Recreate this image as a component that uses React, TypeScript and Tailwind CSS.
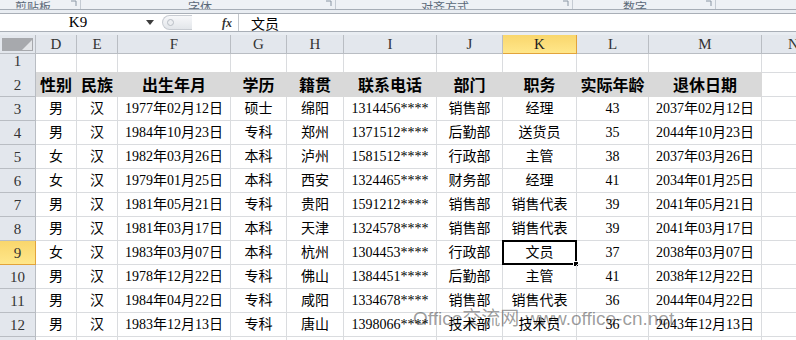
import React from 'react'

const letters = ['D', 'E', 'F', 'G', 'H', 'I', 'J', 'K', 'L', 'M', 'N']
const gridCols =
  'grid grid-cols-[36px_41px_41px_113px_56px_57px_93px_66px_74px_72px_113px_64px]'

const headers = ['性别', '民族', '出生年月', '学历', '籍贯', '联系电话', '部门', '职务', '实际年龄', '退休日期']

const rows: string[][] = [
  ['男', '汉', '1977年02月12日', '硕士', '绵阳', '1314456****', '销售部', '经理', '43', '2037年02月12日'],
  ['男', '汉', '1984年10月23日', '专科', '郑州', '1371512****', '后勤部', '送货员', '35', '2044年10月23日'],
  ['女', '汉', '1982年03月26日', '本科', '泸州', '1581512****', '行政部', '主管', '38', '2037年03月26日'],
  ['女', '汉', '1979年01月25日', '本科', '西安', '1324465****', '财务部', '经理', '41', '2034年01月25日'],
  ['男', '汉', '1981年05月21日', '专科', '贵阳', '1591212****', '销售部', '销售代表', '39', '2041年05月21日'],
  ['男', '汉', '1981年03月17日', '本科', '天津', '1324578****', '销售部', '销售代表', '39', '2041年03月17日'],
  ['女', '汉', '1983年03月07日', '本科', '杭州', '1304453****', '行政部', '文员', '37', '2038年03月07日'],
  ['男', '汉', '1978年12月22日', '专科', '佛山', '1384451****', '后勤部', '主管', '41', '2038年12月22日'],
  ['男', '汉', '1984年04月22日', '专科', '咸阳', '1334678****', '销售部', '销售代表', '36', '2044年04月22日'],
  ['男', '汉', '1983年12月13日', '专科', '唐山', '1398066****', '技术部', '技术员', '36', '2043年12月13日'],
]

function RowHeader({ n, active }: { n: number | string; active?: boolean }) {
  return (
    <div
      className={`flex items-end justify-center pb-[3px] border-r border-b font-['Liberation_Serif',serif] text-[15px] leading-none ${
        active
          ? 'bg-gradient-to-b from-[#f9d66c] to-[#ffe78a] border-[#e2a33b] text-[#333]'
          : 'bg-[#e3e7ed] border-[#b9bdc3] text-[#333]'
      }`}
    >
      {n}
    </div>
  )
}

function Launcher() {
  return (
    <svg width="7" height="7" viewBox="0 0 7 7" className="mb-[2px]">
      <path d="M1 1h5v5" fill="none" stroke="#8a96a4" strokeWidth="1" />
    </svg>
  )
}

export default function App() {
  return (
    <div className="relative h-[340px] w-[796px] overflow-hidden bg-white">
      {/* ribbon group labels, clipped */}
      <div className="flex h-[10px] overflow-hidden border-b border-[#a6adb6] bg-[#eef1f5] font-['Noto_Sans_CJK_SC',sans-serif] text-[12px] text-[#5a6878]">
        <div className="flex w-[81px] items-end justify-between border-r border-[#c5cbd3] pl-[15px] pr-[3px]">
          <span className="-mb-[4px] leading-none">剪贴板</span>
          <Launcher />
        </div>
        <div className="flex w-[255px] items-end justify-between border-r border-[#c5cbd3] pl-[107px] pr-[3px]">
          <span className="-mb-[4px] leading-none">字体</span>
          <Launcher />
        </div>
        <div className="flex w-[237px] items-end justify-between border-r border-[#c5cbd3] pl-[85px] pr-[3px]">
          <span className="-mb-[4px] leading-none">对齐方式</span>
          <Launcher />
        </div>
        <div className="flex w-[143px] items-end justify-between border-r border-[#c5cbd3] pl-[50px] pr-[3px]">
          <span className="-mb-[4px] leading-none">数字</span>
          <Launcher />
        </div>
        <div className="flex-1" />
      </div>
      <div className="h-[3px] bg-[#e9edf2]" />

      {/* formula bar */}
      <div className="flex h-[19px] border-y border-[#a9afb7] bg-white">
        <div className="flex w-[160px] items-center">
          <span className="flex-1 pl-[10px] text-center font-['Liberation_Serif',serif] text-[15px] leading-none text-black">
            K9
          </span>
          <svg width="8" height="5" viewBox="0 0 8 5" className="mr-[6px]">
            <path d="M0 0h8L4 5z" fill="#3c3c3c" />
          </svg>
        </div>
        <div className="flex w-[78px] items-center">
          <div className="ml-[2px] flex h-[15px] w-[30px] items-center rounded-l-full border border-r-0 border-[#c8ccd2] bg-gradient-to-b from-[#f7f8fa] to-[#e3e6ea] pl-[4px]">
            <div className="h-[7px] w-[7px] rounded-full border border-[#b9bec5] bg-[#eceef1]" />
          </div>
          <span className="ml-auto mr-[6px] font-['Liberation_Serif',serif] text-[12px] font-bold italic leading-none text-[#333]">
            fx
          </span>
        </div>
        <div className="flex flex-1 items-center border-l border-[#c3c7cc] pl-[12px] font-['Noto_Sans_CJK_SC',sans-serif] text-[14px] leading-none text-black">
          文员
        </div>
      </div>
      <div className="h-[3px] bg-[#e9edf2]" />

      {/* column headers */}
      <div className={`${gridCols} h-[19px]`}>
        <div className="flex items-center justify-center border-r border-b border-[#b9bdc3] bg-[#e3e7ed]">
          <svg width="31" height="13" viewBox="0 0 31 13">
            <rect x="0" y="0" width="31" height="13" fill="#a7a9ad" />
            <path d="M30 2v10H20z" fill="#e3e5e8" />
          </svg>
        </div>
        {letters.map((l) => (
          <div
            key={l}
            className={`flex items-center justify-center border-r border-b font-['Liberation_Serif',serif] text-[15px] leading-none ${
              l === 'K'
                ? 'bg-gradient-to-b from-[#f9d66c] to-[#ffe78a] border-[#e2a33b] text-[#222]'
                : 'bg-[#e3e7ed] border-[#b9bdc3] text-[#333]'
            }`}
          >
            {l}
          </div>
        ))}
      </div>

      {/* row 1 */}
      <div className={`${gridCols} h-[18px]`}>
        <RowHeader n={1} />
        {letters.map((l) => (
          <div key={l} className="border-r border-b border-[#dadcdf]" />
        ))}
      </div>

      {/* row 2: headings */}
      <div className={`${gridCols} h-[25px]`}>
        <RowHeader n={2} />
        {headers.map((h) => (
          <div
            key={h}
            className="flex items-center justify-center whitespace-nowrap border-r border-b border-[#d9d9d9] bg-[#d9d9d9] font-['Noto_Sans_CJK_SC',sans-serif] text-[16px] font-bold leading-none text-black"
          >
            {h}
          </div>
        ))}
        <div className="border-r border-b border-[#dadcdf]" />
      </div>

      {/* data rows */}
      {rows.map((r, i) => {
        const rowNum = i + 3
        return (
          <div key={rowNum} className={`${gridCols} h-[24px]`}>
            <RowHeader n={rowNum} active={rowNum === 9} />
            {r.map((v, j) => (
              <div
                key={j}
                className="relative flex items-center justify-center whitespace-nowrap border-r border-b border-[#dadcdf] font-['Liberation_Serif','Noto_Sans_CJK_SC',serif] text-[14px] leading-none text-black"
              >
                {v}
                {rowNum === 9 && j === 7 && (
                  <div className="absolute -left-[1px] -top-[1px] h-[25px] w-[75px] border-2 border-black">
                    <div className="absolute -bottom-[4px] -right-[4px] h-[6px] w-[6px] border border-white bg-black" />
                  </div>
                )}
              </div>
            ))}
            <div className="border-r border-b border-[#dadcdf]" />
          </div>
        )
      })}

      {/* row 13, partly visible */}
      <div className={`${gridCols} h-[24px]`}>
        <RowHeader n={13} />
        {letters.map((l) => (
          <div key={l} className="border-r border-b border-[#dadcdf]" />
        ))}
      </div>

      {/* watermark */}
      <div className="pointer-events-none absolute left-[413px] top-[309px] whitespace-nowrap font-['Liberation_Sans','Noto_Sans_CJK_SC',sans-serif] text-[19px] leading-none text-black/40">
        Office交流网-www.office-cn.net
      </div>
    </div>
  )
}
